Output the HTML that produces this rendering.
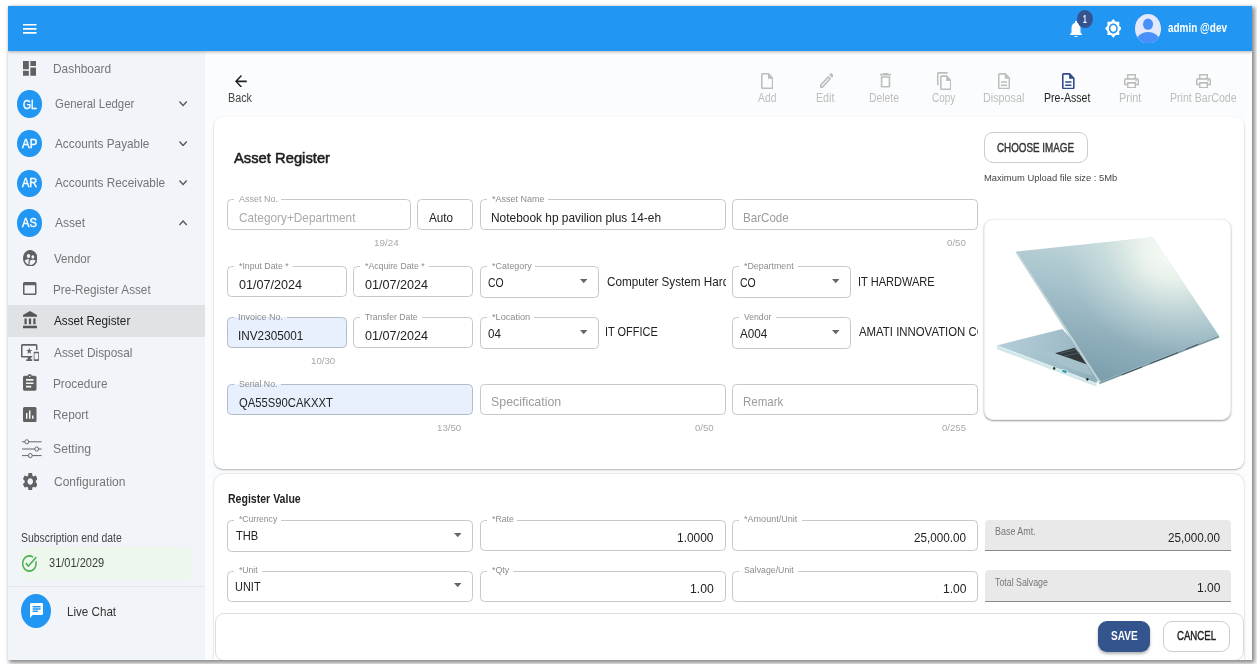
<!DOCTYPE html>
<html lang="en"><head><meta charset="utf-8"><title>Asset Register</title>
<style>
html,body{margin:0;padding:0;background:#fff}
body{width:1257px;height:664px;overflow:hidden;position:relative;font-family:"Liberation Sans",sans-serif}
#app{position:absolute;left:0;top:0;width:1257px;height:664px;overflow:hidden}
.a{position:absolute;display:block}
.t{position:absolute;white-space:nowrap;line-height:20px;transform-origin:0 50%;display:block}
.clip{position:absolute;height:20px;overflow:hidden}
</style></head><body>
<div class="a" style="left:8px;top:6px;width:1244px;height:654px;box-shadow:2px 2px 4px 1px rgba(0,0,0,.45)"></div>
<div class="a" style="left:8px;top:6px;width:1244px;height:654px;overflow:hidden"><div id="app" style="left:-8px;top:-6px">
<div class="a" style="left:8.00px;top:6.00px;width:1244.00px;height:654.00px;background:#fbfcfd"></div>
<div class="a" style="left:1245.50px;top:51.00px;width:6.50px;height:609.00px;background:#fdfdfe"></div>
<div class="a" style="left:8.00px;top:51.00px;width:197.00px;height:609.00px;background:#f1f4f9"></div>
<div class="a" style="left:8.00px;top:6.00px;width:1244.00px;height:45.00px;background:#2196f3;box-shadow:0 1px 3px rgba(0,0,0,.3)"></div>
<svg class="a" style="left:23.00px;top:24.30px" width="13.50" height="9.70" viewBox="3.000 6.000 18.000 12.000" preserveAspectRatio="none"><path fill="#fff" d="M3 18h18v-2H3v2zm0-5h18v-2H3v2zm0-7v2h18V6H3z"/></svg>
<svg class="a" style="left:1069.70px;top:20.70px" width="12.00" height="16.70" viewBox="4.000 2.500 16.000 19.500" preserveAspectRatio="none"><path fill="#fff" d="M12 22c1.1 0 2-.9 2-2h-4c0 1.1.89 2 2 2zm6-6v-5c0-3.07-1.64-5.64-4.5-6.32V4c0-.83-.67-1.5-1.5-1.5s-1.5.67-1.5 1.5v.68C7.63 5.36 6 7.92 6 11v5l-2 2v1h16v-1l-2-2z"/></svg>
<div class="a" style="left:1076.60px;top:9.50px;width:16.50px;height:18.40px;background:#35538f;border-radius:50%"></div>
<svg class="a" style="left:1104.70px;top:19.40px" width="16.70" height="18.80" viewBox="0.690 0.690 22.620 22.620" preserveAspectRatio="none"><path fill="#fff" d="M20 8.69V4h-4.69L12 .69 8.69 4H4v4.69L.69 12 4 15.31V20h4.69L12 23.31 15.31 20H20v-4.69L23.31 12 20 8.69zM12 18c-3.31 0-6-2.69-6-6s2.69-6 6-6 6 2.69 6 6-2.69 6-6 6zm0-10c-2.21 0-4 1.79-4 4s1.79 4 4 4 4-1.79 4-4-1.79-4-4-4z"/></svg>
<svg class="a" style="left:1135.2px;top:13.7px" width="26.1" height="29.5" viewBox="0 0 40 40" preserveAspectRatio="none"><defs><clipPath id="av"><circle cx="20" cy="20" r="20"/></clipPath></defs><g clip-path="url(#av)"><rect width="40" height="40" fill="#e3e8fc"/><circle cx="20" cy="13.8" r="7.7" fill="#4a90fb"/><ellipse cx="20" cy="42.5" rx="20.8" ry="18" fill="#4a90fb"/></g></svg>
<svg class="a" style="left:23.20px;top:61.20px" width="13.20" height="14.80" viewBox="3.000 3.000 18.000 18.000" preserveAspectRatio="none"><path fill="#616161" d="M3 13h8V3H3v10zm0 8h8v-6H3v6zm10 0h8V11h-8v10zm0-18v6h8V3h-8z"/></svg>
<div class="a" style="left:17.10px;top:90.30px;width:24.70px;height:27.40px;background:#2196f3;border-radius:50%"></div>
<div class="a" style="left:17.10px;top:129.80px;width:24.70px;height:27.40px;background:#2196f3;border-radius:50%"></div>
<div class="a" style="left:17.10px;top:169.50px;width:24.70px;height:27.40px;background:#2196f3;border-radius:50%"></div>
<div class="a" style="left:17.10px;top:209.30px;width:24.70px;height:27.40px;background:#2196f3;border-radius:50%"></div>
<svg class="a" style="left:178.80px;top:101.40px" width="8.20" height="5.60" viewBox="6.000 8.590 12.000 7.410" preserveAspectRatio="none"><path fill="#555" d="M16.59 8.59L12 13.17 7.41 8.59 6 10l6 6 6-6z"/></svg>
<svg class="a" style="left:178.80px;top:140.90px" width="8.20" height="5.60" viewBox="6.000 8.590 12.000 7.410" preserveAspectRatio="none"><path fill="#555" d="M16.59 8.59L12 13.17 7.41 8.59 6 10l6 6 6-6z"/></svg>
<svg class="a" style="left:178.80px;top:180.40px" width="8.20" height="5.60" viewBox="6.000 8.590 12.000 7.410" preserveAspectRatio="none"><path fill="#555" d="M16.59 8.59L12 13.17 7.41 8.59 6 10l6 6 6-6z"/></svg>
<svg class="a" style="left:178.80px;top:220.30px" width="8.20" height="5.50" viewBox="6.000 8.000 12.000 7.410" preserveAspectRatio="none"><path fill="#555" d="M12 8l-6 6 1.41 1.41L12 10.83l4.59 4.58L18 14z"/></svg>
<svg class="a" style="left:22.70px;top:249.60px" width="14.50" height="16.70" viewBox="1.990 2.000 20.000 20.000" preserveAspectRatio="none"><path fill="#616161" d="M11.99 2c-5.52 0-10 4.48-10 10s4.48 10 10 10 10-4.48 10-10-4.48-10-10-10zm3.61 6.34c1.07 0 1.93.86 1.93 1.93 0 1.07-.86 1.93-1.93 1.93-1.07 0-1.93-.86-1.93-1.93-.01-1.07.86-1.93 1.93-1.93zm-6-1.58c1.3 0 2.36 1.06 2.36 2.36 0 1.3-1.06 2.36-2.36 2.36s-2.36-1.06-2.36-2.36c0-1.31 1.05-2.36 2.36-2.36zm0 9.13v3.75c-2.4-.75-4.3-2.6-5.14-4.96 1.05-1.12 3.67-1.69 5.14-1.69.53 0 1.2.08 1.9.22-1.64.87-1.9 2.02-1.9 2.68zM11.99 20c-.27 0-.53-.01-.79-.04v-4.07c0-1.42 2.94-2.13 4.4-2.13 1.07 0 2.92.39 3.84 1.15-1.17 2.97-4.06 5.09-7.45 5.09z"/></svg>
<svg class="a" style="left:23.20px;top:282.30px" width="13.50" height="13.20" viewBox="3.000 4.000 18.000 16.000" preserveAspectRatio="none"><path fill="#616161" d="M19 4H5c-1.11 0-2 .9-2 2v12c0 1.1.89 2 2 2h14c1.1 0 2-.9 2-2V6c0-1.1-.89-2-2-2zm0 14H5V8h14v10z"/></svg>
<div class="a" style="left:8.00px;top:305.40px;width:197.00px;height:31.30px;background:#dfe3e6"></div>
<svg class="a" style="left:22.70px;top:311.30px" width="14.00" height="17.30" viewBox="2.000 1.000 19.000 21.000" preserveAspectRatio="none"><path fill="#555" d="M4 10v7h3v-7H4zm6 0v7h3v-7h-3zM2 22h19v-3H2v3zm14-12v7h3v-7h-3zm-4.5-9L2 6v2h19V6l-9.5-5z"/></svg>
<svg class="a" style="left:21.10px;top:343.60px" width="18.00" height="17.00" viewBox="0.000 2.000 24.000 20.000" preserveAspectRatio="none"><path fill="#616161" d="M23 11.01L18 11c-.55 0-1 .45-1 1v9c0 .55.45 1 1 1h5c.55 0 1-.45 1-1v-9c0-.55-.45-.99-1-.99zM23 20h-5v-7h5v7zM20 2H2C.89 2 0 2.89 0 4v12c0 1.1.89 2 2 2h7v2H7v2h8v-2h-2v-2h2v-2H2V4h18v5h2V4c0-1.11-.9-2-2-2zm-8.03 7L11 6l-.97 3H7l2.47 1.76-.94 2.91 2.47-1.8 2.47 1.8-.94-2.91L15 9h-3.03z"/></svg>
<svg class="a" style="left:23.20px;top:373.90px" width="13.50" height="16.80" viewBox="3.000 1.000 18.000 20.000" preserveAspectRatio="none"><path fill="#616161" d="M19 3h-4.18C14.4 1.84 13.3 1 12 1c-1.3 0-2.4.84-2.82 2H5c-1.1 0-2 .9-2 2v14c0 1.1.9 2 2 2h14c1.1 0 2-.9 2-2V5c0-1.1-.9-2-2-2zm-7 0c.55 0 1 .45 1 1s-.45 1-1 1-1-.45-1-1 .45-1 1-1zm2 14H7v-2h7v2zm3-4H7v-2h10v2zm0-4H7V7h10v2z"/></svg>
<svg class="a" style="left:23.20px;top:407.10px" width="13.50" height="15.20" viewBox="3.000 3.000 18.000 18.000" preserveAspectRatio="none"><path fill="#616161" d="M19 3H5c-1.1 0-2 .9-2 2v14c0 1.1.9 2 2 2h14c1.1 0 2-.9 2-2V5c0-1.1-.9-2-2-2zM9 17H7v-7h2v7zm4 0h-2V7h2v10zm4 0h-2v-4h2v4z"/></svg>
<svg class="a" style="left:22px;top:439px" width="19.6" height="20" viewBox="0 0 19.6 20"><g stroke="#666" stroke-width="1" fill="#f1f4f9"><path d="M0 2.8H19.6M0 10H19.6M0 16.6H19.6" fill="none"/><ellipse cx="4.8" cy="2.8" rx="1.9" ry="2.1"/><ellipse cx="14.7" cy="10" rx="1.9" ry="2.1"/><ellipse cx="8.3" cy="16.6" rx="1.9" ry="2.1"/></g></svg>
<svg class="a" style="left:22.70px;top:472.90px" width="14.50" height="17.20" viewBox="2.662 2.400 18.676 19.200" preserveAspectRatio="none"><path fill="#616161" d="M19.14 12.94c.04-.3.06-.61.06-.94 0-.32-.02-.64-.07-.94l2.03-1.58c.18-.14.23-.41.12-.61l-1.92-3.32c-.12-.22-.37-.29-.59-.22l-2.39.96c-.5-.38-1.03-.7-1.62-.94l-.36-2.54c-.04-.24-.24-.41-.48-.41h-3.84c-.24 0-.43.17-.47.41l-.36 2.54c-.59.24-1.13.57-1.62.94l-2.39-.96c-.22-.08-.47 0-.59.22L2.74 8.87c-.12.21-.08.47.12.61l2.03 1.58c-.05.3-.09.63-.09.94s.02.64.07.94l-2.03 1.58c-.18.14-.23.41-.12.61l1.92 3.32c.12.22.37.29.59.22l2.39-.96c.5.38 1.03.7 1.62.94l.36 2.54c.05.24.24.41.48.41h3.84c.24 0 .44-.17.47-.41l.36-2.54c.59-.24 1.13-.56 1.62-.94l2.39.96c.22.08.47 0 .59-.22l1.92-3.32c.12-.22.07-.47-.12-.61l-2.01-1.58zM12 15.6c-1.98 0-3.6-1.62-3.6-3.6s1.62-3.6 3.6-3.6 3.6 1.62 3.6 3.6-1.62 3.6-3.6 3.6z"/></svg>
<div class="a" style="left:21.10px;top:546.90px;width:170.50px;height:33.20px;background:#edf7ed;border-radius:7px"></div>
<svg class="a" style="left:22.40px;top:555.20px" width="14.80" height="16.90" viewBox="2.000 2.000 20.000 20.000" preserveAspectRatio="none"><path fill="#4caf50" d="M22 5.18L10.59 16.6l-4.24-4.24 1.41-1.41 2.83 2.83 10-10L22 5.18zm-2.21 5.04c.13.57.21 1.17.21 1.78 0 4.42-3.58 8-8 8s-8-3.58-8-8 3.58-8 8-8c1.58 0 3.04.46 4.28 1.25l1.44-1.44C16.1 2.67 14.13 2 12 2 6.48 2 2 6.48 2 12s4.48 10 10 10 10-4.48 10-10c0-1.19-.22-2.33-.6-3.39l-1.61 1.61z"/></svg>
<div class="a" style="left:8.00px;top:586.30px;width:197.00px;height:1.10px;background:#e3e6ea"></div>
<div class="a" style="left:21.00px;top:594.30px;width:30.00px;height:33.90px;background:#2196f3;border-radius:50%"></div>
<svg class="a" style="left:29.50px;top:603.00px" width="13.20" height="14.90" viewBox="2.000 2.000 20.000 20.000" preserveAspectRatio="none"><path fill="#fff" d="M20 2H4c-1.1 0-1.99.9-1.99 2L2 22l4-4h14c1.1 0 2-.9 2-2V4c0-1.1-.9-2-2-2zM6 9h12v2H6V9zm8 5H6v-2h8v2zm4-6H6V6h12v2z"/></svg>
<svg class="a" style="left:234.90px;top:74.70px" width="11.80" height="12.70" viewBox="4.000 4.000 16.000 16.000" preserveAspectRatio="none"><path fill="#222" d="M20 11H7.83l5.59-5.59L12 4l-8 8 8 8 1.41-1.41L7.83 13H20v-2z"/></svg>
<svg class="a" style="left:760.70px;top:72.80px" width="12.40" height="16.20" viewBox="4.000 2.000 16.000 20.000" preserveAspectRatio="none"><path fill="#bdbdbd" d="M14 2H6c-1.1 0-1.99.9-1.99 2L4 20c0 1.1.89 2 1.99 2H18c1.1 0 2-.9 2-2V8l-6-6zM6 20V4h7v5h5v11H6z"/></svg>
<svg class="a" style="left:819.60px;top:73.40px" width="13.50" height="14.90" viewBox="3.000 3.000 18.002 18.000" preserveAspectRatio="none"><path fill="#bdbdbd" d="M14.06 9.02l.92.92L5.92 19H5v-.92l9.06-9.06M17.66 3c-.25 0-.51.1-.7.29l-1.83 1.83 3.75 3.75 1.83-1.83c.39-.39.39-1.02 0-1.41l-2.34-2.34c-.2-.2-.45-.29-.71-.29zm-3.6 3.19L3 17.25V21h3.75L17.81 9.94l-3.75-3.75z"/></svg>
<svg class="a" style="left:879.60px;top:73.40px" width="11.00" height="14.50" viewBox="5.000 3.000 14.000 18.000" preserveAspectRatio="none"><path fill="#bdbdbd" d="M16 9v10H8V9h8m-1.500-6h-5l-1 1H5v2h14V4h-3.500l-1-1zM18 7H6v12c0 1.100.900 2 2 2h8c1.100 0 2-.900 2-2V7z"/></svg>
<svg class="a" style="left:936.50px;top:71.80px" width="14.50" height="18.20" viewBox="2.000 1.000 19.000 22.000" preserveAspectRatio="none"><path fill="#bdbdbd" d="M16 1H4c-1.1 0-2 .9-2 2v14h2V3h12V1zm-1 4H8c-1.1 0-1.99.9-1.99 2L6 21c0 1.1.89 2 1.99 2H19c1.1 0 2-.9 2-2V11l-6-6zM8 21V7h6v5h5v9H8z"/></svg>
<svg class="a" style="left:998.30px;top:72.80px" width="12.10" height="16.30" viewBox="4.000 2.000 16.000 20.000" preserveAspectRatio="none"><path fill="#bdbdbd" d="M8 16h8v2H8zm0-4h8v2H8zm6-10H6c-1.1 0-2 .9-2 2v16c0 1.1.89 2 1.990 2H18c1.100 0 2-.900 2-2V8l-6-6zm4 18H6V4h7v5h5v11z"/></svg>
<svg class="a" style="left:1062.20px;top:72.80px" width="12.60" height="16.30" viewBox="4.000 2.000 16.000 20.000" preserveAspectRatio="none"><path fill="#2f4b8a" d="M8 16h8v2H8zm0-4h8v2H8zm6-10H6c-1.1 0-2 .9-2 2v16c0 1.1.89 2 1.990 2H18c1.100 0 2-.900 2-2V8l-6-6zm4 18H6V4h7v5h5v11z"/></svg>
<svg class="a" style="left:1123.70px;top:73.70px" width="15.00" height="14.50" viewBox="2.000 3.000 20.000 18.000" preserveAspectRatio="none"><path fill="#bdbdbd" d="M19 8h-1V3H6v5H5c-1.660 0-3 1.340-3 3v6h4v4h12v-4h4v-6c0-1.660-1.340-3-3-3zM8 5h8v3H8V5zm8 12v2H8v-4h8v2zm2-2v-2H6v2H4v-4c0-.550.450-1 1-1h14c.550 0 1 .450 1 1v4h-2zM18 10.500a1 1 0 1 0 .001 0z"/></svg>
<svg class="a" style="left:1196.00px;top:73.70px" width="15.00" height="14.50" viewBox="2.000 3.000 20.000 18.000" preserveAspectRatio="none"><path fill="#bdbdbd" d="M19 8h-1V3H6v5H5c-1.660 0-3 1.340-3 3v6h4v4h12v-4h4v-6c0-1.660-1.340-3-3-3zM8 5h8v3H8V5zm8 12v2H8v-4h8v2zm2-2v-2H6v2H4v-4c0-.550.450-1 1-1h14c.550 0 1 .450 1 1v4h-2zM18 10.500a1 1 0 1 0 .001 0z"/></svg>
<div class="a" style="left:213.50px;top:117.00px;width:1030.00px;height:352.00px;background:#fff;border-radius:9px;box-shadow:0 1px 2px rgba(0,0,0,.3)"></div>
<div class="a" style="left:213.50px;top:473.50px;width:1030.00px;height:196.50px;background:#fff;border-radius:10px 10px 0 0;box-shadow:0 0 2px rgba(0,0,0,.25)"></div>
<div class="a" style="left:984.40px;top:132.00px;width:103.20px;height:31.20px;box-sizing:border-box;border:1px solid #ccc;border-radius:9px;background:#fff"></div>
<div class="a" style="left:984.00px;top:218.80px;width:246.80px;height:201.20px;box-sizing:border-box;border:1px solid #f0f0f0;border-radius:9px;background:#fff;box-shadow:0 1px 2px rgba(0,0,0,.4)"></div>
<svg class="a" style="left:985px;top:220px" width="245" height="199" viewBox="985 220 245 199">
<defs>
<linearGradient id="lid" gradientUnits="userSpaceOnUse" x1="1118" y1="240" x2="1086" y2="382">
<stop offset="0" stop-color="#c2d8dc"/><stop offset=".35" stop-color="#a9c4cd"/><stop offset=".7" stop-color="#8dadba"/><stop offset="1" stop-color="#7a9cab"/></linearGradient>
<radialGradient id="hl" gradientUnits="userSpaceOnUse" cx="1172" cy="248" r="105">
<stop offset="0" stop-color="#fbfdf7" stop-opacity="1"/><stop offset=".3" stop-color="#f1f7ee" stop-opacity=".85"/><stop offset=".65" stop-color="#e2eee6" stop-opacity=".35"/><stop offset="1" stop-color="#dbe9e4" stop-opacity="0"/></radialGradient>
<linearGradient id="base" gradientUnits="userSpaceOnUse" x1="1000" y1="345" x2="1095" y2="375">
<stop offset="0" stop-color="#b4ced8"/><stop offset=".5" stop-color="#a4c0cb"/><stop offset="1" stop-color="#8eaebb"/></linearGradient>
<filter id="soft" x="-5%" y="-5%" width="110%" height="110%"><feGaussianBlur stdDeviation=".45"/></filter>
</defs>
<g filter="url(#soft)">
<polygon points="996.8,345.4 1062.3,329 1102,372 1096.2,383.3" fill="url(#base)"/>
<polygon points="1040,349 1055,353.3 1085.5,363.5 1093,376 1060,365" fill="#a9c4cd" opacity=".7"/>
<polygon points="996.6,345.2 1096.2,383 1096.8,386.8 997,349.2" fill="#d2e7ea"/>
<path d="M996.8,345.6L1096.2,383.4" stroke="#e6f2f3" stroke-width=".7" fill="none"/>
<polygon points="1055,353.3 1074.7,347.7 1081,356 1086.5,364.2 1069,358" fill="#30373a"/>
<path d="M1060,353.4L1076,349.6M1064,356L1080,352.6" stroke="#566367" stroke-width=".8" fill="none"/>
<polygon points="1016.5,251.5 1152.5,237.2 1218.9,335.4 1100.7,381.8" fill="url(#lid)"/><polygon points="1016.5,251.5 1152.5,237.2 1218.9,335.4 1100.7,381.8" fill="url(#hl)"/>
<polygon points="1016.5,251.5 1100.7,381.8 1099.4,383.4 1015.6,252.6" fill="#bdd0d4"/>
<polygon points="1100.7,381.8 1218.9,335.4 1219.2,337.4 1098.8,384.6" fill="#7b99a3"/>
<path d="M1122 374.8L1142 367M1150 363.6L1178 352.6M1186 349.2L1198 344.4" stroke="#3f5560" stroke-width="1" fill="none"/>
<ellipse cx="1054.2" cy="368.4" rx="1.1" ry="1.3" fill="#262626"/>
<rect x="1061.6" y="369.6" width="5.6" height="3.6" fill="#e3f0f2" transform="rotate(20 1064.4 371.4)"/><rect x="1062.4" y="370.3" width="4.2" height="2.3" fill="#1f9bb2" transform="rotate(20 1064.4 371.4)"/>
<circle cx="1073" cy="374.8" r=".6" fill="#eef6f7"/><circle cx="1077" cy="376.2" r=".6" fill="#eef6f7"/>
<ellipse cx="1087.4" cy="379.3" rx="1.2" ry="1.4" fill="#262626"/>
</g>
</svg>
<div class="a" style="left:227.20px;top:199.00px;width:183.60px;height:31.00px;box-sizing:border-box;border:1px solid #c8c8c8;border-radius:4.5px;background:#fff"></div><div class="a" style="left:234.30px;top:198.50px;width:47.10px;height:1.70px;background:#fff"></div>
<div class="a" style="left:417.30px;top:199.00px;width:55.80px;height:31.00px;box-sizing:border-box;border:1px solid #c8c8c8;border-radius:4.5px;background:#fff"></div>
<div class="a" style="left:480.10px;top:199.00px;width:245.50px;height:31.00px;box-sizing:border-box;border:1px solid #c8c8c8;border-radius:4.5px;background:#fff"></div><div class="a" style="left:486.80px;top:198.50px;width:61.10px;height:1.70px;background:#fff"></div>
<div class="a" style="left:732.20px;top:199.00px;width:246.00px;height:31.00px;box-sizing:border-box;border:1px solid #c8c8c8;border-radius:4.5px;background:#fff"></div>
<div class="a" style="left:227.20px;top:266.00px;width:119.60px;height:31.00px;box-sizing:border-box;border:1px solid #c8c8c8;border-radius:4.5px;background:#fff"></div><div class="a" style="left:234.30px;top:265.50px;width:58.90px;height:1.70px;background:#fff"></div>
<div class="a" style="left:353.30px;top:266.00px;width:119.80px;height:31.00px;box-sizing:border-box;border:1px solid #c8c8c8;border-radius:4.5px;background:#fff"></div><div class="a" style="left:360.40px;top:265.50px;width:68.60px;height:1.70px;background:#fff"></div>
<div class="a" style="left:480.10px;top:266.00px;width:119.40px;height:32.00px;box-sizing:border-box;border:1px solid #c8c8c8;border-radius:4.5px;background:#fff"></div><div class="a" style="left:486.80px;top:265.50px;width:48.60px;height:1.70px;background:#fff"></div><svg class="a" style="left:579.50px;top:279.30px" width="7.50" height="4.20" viewBox="7.000 10.000 10.000 5.000" preserveAspectRatio="none"><path fill="#666" d="M7 10l5 5 5-5z"/></svg>
<div class="a" style="left:732.20px;top:266.00px;width:119.20px;height:32.00px;box-sizing:border-box;border:1px solid #c8c8c8;border-radius:4.5px;background:#fff"></div><div class="a" style="left:739.40px;top:265.50px;width:58.90px;height:1.70px;background:#fff"></div><svg class="a" style="left:831.60px;top:279.30px" width="7.50" height="4.20" viewBox="7.000 10.000 10.000 5.000" preserveAspectRatio="none"><path fill="#666" d="M7 10l5 5 5-5z"/></svg>
<div class="a" style="left:227.20px;top:317.00px;width:119.60px;height:31.00px;box-sizing:border-box;border:1px solid #b3bccd;border-radius:4.5px;background:#e8f0fe"></div><div class="a" style="left:234.30px;top:316.50px;width:52.50px;height:1.70px;background:#e8f0fe"></div>
<div class="a" style="left:353.30px;top:317.00px;width:119.80px;height:31.00px;box-sizing:border-box;border:1px solid #c8c8c8;border-radius:4.5px;background:#fff"></div><div class="a" style="left:360.40px;top:316.50px;width:61.70px;height:1.70px;background:#fff"></div>
<div class="a" style="left:480.10px;top:317.00px;width:119.40px;height:32.00px;box-sizing:border-box;border:1px solid #c8c8c8;border-radius:4.5px;background:#fff"></div><div class="a" style="left:486.80px;top:316.50px;width:46.90px;height:1.70px;background:#fff"></div><svg class="a" style="left:579.50px;top:330.40px" width="7.50" height="4.20" viewBox="7.000 10.000 10.000 5.000" preserveAspectRatio="none"><path fill="#666" d="M7 10l5 5 5-5z"/></svg>
<div class="a" style="left:732.20px;top:317.00px;width:119.20px;height:32.00px;box-sizing:border-box;border:1px solid #c8c8c8;border-radius:4.5px;background:#fff"></div><div class="a" style="left:739.40px;top:316.50px;width:36.30px;height:1.70px;background:#fff"></div><svg class="a" style="left:831.60px;top:330.40px" width="7.50" height="4.20" viewBox="7.000 10.000 10.000 5.000" preserveAspectRatio="none"><path fill="#666" d="M7 10l5 5 5-5z"/></svg>
<div class="a" style="left:227.20px;top:384.00px;width:245.90px;height:31.00px;box-sizing:border-box;border:1px solid #b3bccd;border-radius:4.5px;background:#e8f0fe"></div><div class="a" style="left:234.30px;top:383.50px;width:46.90px;height:1.70px;background:#e8f0fe"></div>
<div class="a" style="left:480.10px;top:384.00px;width:245.50px;height:31.00px;box-sizing:border-box;border:1px solid #c8c8c8;border-radius:4.5px;background:#fff"></div>
<div class="a" style="left:732.20px;top:384.00px;width:246.00px;height:31.00px;box-sizing:border-box;border:1px solid #c8c8c8;border-radius:4.5px;background:#fff"></div>
<div class="a" style="left:227.20px;top:520.00px;width:245.90px;height:32.00px;box-sizing:border-box;border:1px solid #c8c8c8;border-radius:4.5px;background:#fff"></div><div class="a" style="left:234.30px;top:519.50px;width:47.10px;height:1.70px;background:#fff"></div><svg class="a" style="left:453.60px;top:533.00px" width="7.50" height="4.20" viewBox="7.000 10.000 10.000 5.000" preserveAspectRatio="none"><path fill="#666" d="M7 10l5 5 5-5z"/></svg>
<div class="a" style="left:480.10px;top:520.00px;width:245.50px;height:31.00px;box-sizing:border-box;border:1px solid #c8c8c8;border-radius:4.5px;background:#fff"></div><div class="a" style="left:486.80px;top:519.50px;width:30.40px;height:1.70px;background:#fff"></div>
<div class="a" style="left:732.20px;top:520.00px;width:246.00px;height:31.00px;box-sizing:border-box;border:1px solid #c8c8c8;border-radius:4.5px;background:#fff"></div><div class="a" style="left:739.40px;top:519.50px;width:62.80px;height:1.70px;background:#fff"></div>
<div class="a" style="left:984.90px;top:520.00px;width:245.70px;height:31.00px;background:#e9e9e9;border-radius:4px 4px 0 0;border-bottom:1px solid #8a8a8a;box-sizing:border-box"></div>
<div class="a" style="left:227.20px;top:571.00px;width:245.90px;height:31.00px;box-sizing:border-box;border:1px solid #c8c8c8;border-radius:4.5px;background:#fff"></div><div class="a" style="left:234.30px;top:570.50px;width:27.60px;height:1.70px;background:#fff"></div><svg class="a" style="left:453.60px;top:583.00px" width="7.50" height="4.20" viewBox="7.000 10.000 10.000 5.000" preserveAspectRatio="none"><path fill="#666" d="M7 10l5 5 5-5z"/></svg>
<div class="a" style="left:480.10px;top:571.00px;width:245.50px;height:31.00px;box-sizing:border-box;border:1px solid #c8c8c8;border-radius:4.5px;background:#fff"></div><div class="a" style="left:486.80px;top:570.50px;width:26.10px;height:1.70px;background:#fff"></div>
<div class="a" style="left:732.20px;top:571.00px;width:246.00px;height:31.00px;box-sizing:border-box;border:1px solid #c8c8c8;border-radius:4.5px;background:#fff"></div><div class="a" style="left:739.40px;top:570.50px;width:58.90px;height:1.70px;background:#fff"></div>
<div class="a" style="left:984.90px;top:570.00px;width:245.70px;height:32.00px;background:#e9e9e9;border-radius:4px 4px 0 0;border-bottom:1px solid #8a8a8a;box-sizing:border-box"></div>
<div class="a" style="left:214.50px;top:612.50px;width:1029.00px;height:48.00px;background:#fff;border:1px solid #dcdcdc;border-radius:9px;box-sizing:border-box"></div>
<div class="a" style="left:1098.00px;top:621.00px;width:52.00px;height:31.00px;background:#34548e;border-radius:9px;box-shadow:0 2px 3px rgba(0,0,0,.3)"></div>
<div class="a" style="left:1163.40px;top:621.00px;width:66.40px;height:31.00px;background:#fff;border:1px solid #ccc;border-radius:9px;box-sizing:border-box"></div>
<span class="t" style="left:1167.90px;top:18.00px;font-size:12px;color:#fff;transform:scaleX(0.8300);font-weight:700">admin @dev</span>
<span class="t" style="left:1082.50px;top:10.00px;font-size:10px;color:#fff;transform:scaleX(0.6644);font-weight:700">1</span>
<span class="t" style="left:53.42px;top:59.00px;font-size:13.5px;color:#757575;transform:scaleX(0.8800)">Dashboard</span>
<span class="t" style="left:54.80px;top:94.00px;font-size:13.5px;color:#757575;transform:scaleX(0.8459)">General Ledger</span>
<span class="t" style="left:54.80px;top:134.00px;font-size:13.5px;color:#757575;transform:scaleX(0.8730)">Accounts Payable</span>
<span class="t" style="left:54.80px;top:173.00px;font-size:13.5px;color:#757575;transform:scaleX(0.8731)">Accounts Receivable</span>
<span class="t" style="left:54.80px;top:213.00px;font-size:13.5px;color:#757575;transform:scaleX(0.8914)">Asset</span>
<span class="t" style="left:54.30px;top:249.00px;font-size:13.5px;color:#757575;transform:scaleX(0.8543)">Vendor</span>
<span class="t" style="left:53.43px;top:280.00px;font-size:13.5px;color:#757575;transform:scaleX(0.8675)">Pre-Register Asset</span>
<span class="t" style="left:54.30px;top:311.00px;font-size:13.5px;color:#222;transform:scaleX(0.8690)">Asset Register</span>
<span class="t" style="left:54.30px;top:343.00px;font-size:13.5px;color:#757575;transform:scaleX(0.8779)">Asset Disposal</span>
<span class="t" style="left:53.42px;top:374.00px;font-size:13.5px;color:#757575;transform:scaleX(0.8745)">Procedure</span>
<span class="t" style="left:53.42px;top:405.00px;font-size:13.5px;color:#757575;transform:scaleX(0.8782)">Report</span>
<span class="t" style="left:53.47px;top:439.00px;font-size:13.5px;color:#757575;transform:scaleX(0.9049)">Setting</span>
<span class="t" style="left:54.30px;top:472.00px;font-size:13.5px;color:#757575;transform:scaleX(0.8891)">Configuration</span>
<span class="t" style="left:21.10px;top:528.00px;font-size:12px;color:#444;transform:scaleX(0.8677)">Subscription end date</span>
<span class="t" style="left:48.70px;top:553.00px;font-size:12.5px;color:#3a3d3a;transform:scaleX(0.8821)">31/01/2029</span>
<span class="t" style="left:66.53px;top:602.00px;font-size:13.5px;color:#333;transform:scaleX(0.8604)">Live Chat</span>
<span class="t" style="left:22.71px;top:95.00px;font-size:12.5px;color:#fff;transform:scaleX(0.8254);-webkit-text-stroke:0.4px #fff">GL</span>
<span class="t" style="left:22.12px;top:134.00px;font-size:12.5px;color:#fff;transform:scaleX(0.9192);-webkit-text-stroke:0.4px #fff">AP</span>
<span class="t" style="left:22.12px;top:173.00px;font-size:12.5px;color:#fff;transform:scaleX(0.8824);-webkit-text-stroke:0.4px #fff">AR</span>
<span class="t" style="left:22.12px;top:213.00px;font-size:12.5px;color:#fff;transform:scaleX(0.8889);-webkit-text-stroke:0.4px #fff">AS</span>
<span class="t" style="left:228.07px;top:88.00px;font-size:12px;color:#444;transform:scaleX(0.8985)">Back</span>
<span class="t" style="left:757.60px;top:88.00px;font-size:12px;color:#bdbdbd;transform:scaleX(0.8612)">Add</span>
<span class="t" style="left:816.07px;top:88.00px;font-size:12px;color:#bdbdbd;transform:scaleX(0.8893)">Edit</span>
<span class="t" style="left:869.49px;top:88.00px;font-size:12px;color:#bdbdbd;transform:scaleX(0.8659)">Delete</span>
<span class="t" style="left:932.30px;top:88.00px;font-size:12px;color:#bdbdbd;transform:scaleX(0.8262)">Copy</span>
<span class="t" style="left:983.17px;top:88.00px;font-size:12px;color:#bdbdbd;transform:scaleX(0.8980)">Disposal</span>
<span class="t" style="left:1044.17px;top:88.00px;font-size:12px;color:#222;transform:scaleX(0.8791)">Pre-Asset</span>
<span class="t" style="left:1119.07px;top:88.00px;font-size:12px;color:#bdbdbd;transform:scaleX(0.9064)">Print</span>
<span class="t" style="left:1169.77px;top:88.00px;font-size:12px;color:#bdbdbd;transform:scaleX(0.8844)">Print BarCode</span>
<span class="t" style="left:234.47px;top:148.00px;font-size:15.5px;color:#1d1d1d;transform:scaleX(0.9526);-webkit-text-stroke:0.55px #1d1d1d">Asset Register</span>
<span class="t" style="left:997.41px;top:138.00px;font-size:12.5px;color:#333;transform:scaleX(0.7869);-webkit-text-stroke:0.4px #333">CHOOSE IMAGE</span>
<span class="t" style="left:983.64px;top:168.00px;font-size:9px;color:#444;transform:scaleX(1.0453)">Maximum Upload file size : 5Mb</span>
<span class="t" style="left:239.00px;top:189.00px;font-size:9.5px;color:#9e9e9e;transform:scaleX(0.9451)">Asset No.</span>
<span class="t" style="left:239.00px;top:208.00px;font-size:13.5px;color:#a9a9ab;transform:scaleX(0.8744)">Category+Department</span>
<span class="t" style="left:428.60px;top:208.00px;font-size:13.5px;color:#222;transform:scaleX(0.8661)">Auto</span>
<span class="t" style="left:373.88px;top:233.00px;font-size:9px;color:#a8a8a8;transform:scaleX(1.0966)">19/24</span>
<span class="t" style="left:491.50px;top:189.00px;font-size:9.5px;color:#8c8c8c;transform:scaleX(0.9486)">*Asset Name</span>
<span class="t" style="left:490.62px;top:208.00px;font-size:13.5px;color:#222;transform:scaleX(0.8817)">Notebook hp pavilion plus 14-eh</span>
<span class="t" style="left:743.23px;top:208.00px;font-size:13.5px;color:#9b9b9b;transform:scaleX(0.8580)">BarCode</span>
<span class="t" style="left:947.20px;top:233.00px;font-size:9px;color:#a8a8a8;transform:scaleX(1.0790)">0/50</span>
<span class="t" style="left:239.00px;top:256.00px;font-size:9.5px;color:#8c8c8c;transform:scaleX(0.9230)">*Input Date *</span>
<span class="t" style="left:239.00px;top:275.00px;font-size:13.5px;color:#222;transform:scaleX(0.9325)">01/07/2024</span>
<span class="t" style="left:365.10px;top:256.00px;font-size:9.5px;color:#8c8c8c;transform:scaleX(0.9183)">*Acquire Date *</span>
<span class="t" style="left:365.10px;top:275.00px;font-size:13.5px;color:#222;transform:scaleX(0.9325)">01/07/2024</span>
<span class="t" style="left:491.50px;top:256.00px;font-size:9.5px;color:#8c8c8c;transform:scaleX(0.9403)">*Category</span>
<span class="t" style="left:488.30px;top:273.00px;font-size:13.5px;color:#222;transform:scaleX(0.7691)">CO</span>
<div class="clip" style="left:605.50px;top:272.00px;width:120.20px"><span class="t" style="left:1.00px;top:0.00px;font-size:13.5px;color:#222;transform:scaleX(0.8659)">Computer System Hardware</span></div>
<span class="t" style="left:744.10px;top:256.00px;font-size:9.5px;color:#8c8c8c;transform:scaleX(0.9305)">*Department</span>
<span class="t" style="left:740.40px;top:273.00px;font-size:13.5px;color:#222;transform:scaleX(0.7775)">CO</span>
<span class="t" style="left:857.59px;top:272.00px;font-size:13.5px;color:#222;transform:scaleX(0.8180)">IT HARDWARE</span>
<span class="t" style="left:238.20px;top:307.00px;font-size:9.5px;color:#8c8c8c;transform:scaleX(0.9461)">Invoice No.</span>
<span class="t" style="left:238.09px;top:326.00px;font-size:13.5px;color:#222;transform:scaleX(0.8707)">INV2305001</span>
<span class="t" style="left:310.60px;top:351.00px;font-size:9px;color:#a8a8a8;transform:scaleX(1.0770)">10/30</span>
<span class="t" style="left:365.10px;top:307.00px;font-size:9.5px;color:#8c8c8c;transform:scaleX(0.9118)">Transfer Date</span>
<span class="t" style="left:365.10px;top:326.00px;font-size:13.5px;color:#222;transform:scaleX(0.9325)">01/07/2024</span>
<span class="t" style="left:491.50px;top:307.00px;font-size:9.5px;color:#8c8c8c;transform:scaleX(0.9643)">*Location</span>
<span class="t" style="left:488.30px;top:324.00px;font-size:13.5px;color:#222;transform:scaleX(0.8621)">04</span>
<span class="t" style="left:605.49px;top:322.00px;font-size:13.5px;color:#222;transform:scaleX(0.8104)">IT OFFICE</span>
<span class="t" style="left:744.10px;top:307.00px;font-size:9.5px;color:#8c8c8c;transform:scaleX(0.9075)">Vendor</span>
<span class="t" style="left:740.40px;top:324.00px;font-size:13.5px;color:#222;transform:scaleX(0.8673)">A004</span>
<div class="clip" style="left:857.50px;top:322.00px;width:120.70px"><span class="t" style="left:1.00px;top:0.00px;font-size:13.5px;color:#222;transform:scaleX(0.8440)">AMATI INNOVATION CO., LTD.</span></div>
<span class="t" style="left:239.00px;top:374.00px;font-size:9.5px;color:#8c8c8c;transform:scaleX(0.9218)">Serial No.</span>
<span class="t" style="left:239.00px;top:393.00px;font-size:13.5px;color:#222;transform:scaleX(0.8331)">QA55S90CAKXXT</span>
<span class="t" style="left:436.90px;top:418.00px;font-size:9px;color:#a8a8a8;transform:scaleX(1.0770)">13/50</span>
<span class="t" style="left:490.67px;top:392.00px;font-size:13.5px;color:#9b9b9b;transform:scaleX(0.9167)">Specification</span>
<span class="t" style="left:694.90px;top:418.00px;font-size:9px;color:#a8a8a8;transform:scaleX(1.0671)">0/50</span>
<span class="t" style="left:743.25px;top:392.00px;font-size:13.5px;color:#9b9b9b;transform:scaleX(0.8524)">Remark</span>
<span class="t" style="left:941.90px;top:418.00px;font-size:9px;color:#a8a8a8;transform:scaleX(1.0641)">0/255</span>
<span class="t" style="left:227.60px;top:489.00px;font-size:12.5px;color:#222;transform:scaleX(0.8443);font-weight:700">Register Value</span>
<span class="t" style="left:239.00px;top:509.00px;font-size:9.5px;color:#8c8c8c;transform:scaleX(0.9038)">*Currency</span>
<span class="t" style="left:236.20px;top:526.00px;font-size:13.5px;color:#222;transform:scaleX(0.8251)">THB</span>
<span class="t" style="left:491.50px;top:509.00px;font-size:9.5px;color:#8c8c8c;transform:scaleX(0.9138)">*Rate</span>
<span class="t" style="left:677.45px;top:528.00px;font-size:13.5px;color:#222;transform:scaleX(0.8837)">1.0000</span>
<span class="t" style="left:744.10px;top:509.00px;font-size:9.5px;color:#8c8c8c;transform:scaleX(0.9530)">*Amount/Unit</span>
<span class="t" style="left:914.40px;top:528.00px;font-size:13.5px;color:#222;transform:scaleX(0.8657)">25,000.00</span>
<span class="t" style="left:994.80px;top:521.00px;font-size:10.5px;color:#777;transform:scaleX(0.8513)">Base Amt.</span>
<span class="t" style="left:1168.30px;top:528.00px;font-size:13.5px;color:#222;transform:scaleX(0.8657)">25,000.00</span>
<span class="t" style="left:239.00px;top:560.00px;font-size:9.5px;color:#8c8c8c;transform:scaleX(0.9069)">*Unit</span>
<span class="t" style="left:234.99px;top:577.00px;font-size:13.5px;color:#222;transform:scaleX(0.8120)">UNIT</span>
<span class="t" style="left:491.50px;top:560.00px;font-size:9.5px;color:#8c8c8c;transform:scaleX(0.9291)">*Qty</span>
<span class="t" style="left:690.35px;top:579.00px;font-size:13.5px;color:#222;transform:scaleX(0.9029)">1.00</span>
<span class="t" style="left:744.10px;top:560.00px;font-size:9.5px;color:#8c8c8c;transform:scaleX(0.9214)">Salvage/Unit</span>
<span class="t" style="left:942.95px;top:579.00px;font-size:13.5px;color:#222;transform:scaleX(0.8957)">1.00</span>
<span class="t" style="left:994.80px;top:572.00px;font-size:10.5px;color:#777;transform:scaleX(0.8383)">Total Salvage</span>
<span class="t" style="left:1197.15px;top:578.00px;font-size:13.5px;color:#222;transform:scaleX(0.8882)">1.00</span>
<span class="t" style="left:1110.80px;top:626.00px;font-size:12px;color:#fff;transform:scaleX(0.8362);font-weight:700">SAVE</span>
<span class="t" style="left:1176.72px;top:626.00px;font-size:12px;color:#222;transform:scaleX(0.8016);-webkit-text-stroke:0.4px #222">CANCEL</span>
</div></div></body></html>
